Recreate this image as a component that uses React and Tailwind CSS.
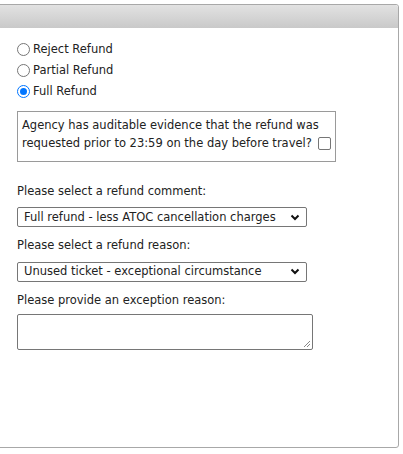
const refundTypes = [
  { value: "reject", label: "Reject Refund" },
  { value: "partial", label: "Partial Refund" },
  { value: "full", label: "Full Refund" },
];

function Radio({ checked, label }) {
  return (
    <label className="flex h-[21px] items-center">
      <span
        className={`mr-[3px] flex h-[13px] w-[13px] items-center justify-center rounded-full border ${
          checked ? "border-[#0075ff]" : "border-[#767676]"
        } bg-white`}
      >
        {checked && <span className="h-[7px] w-[7px] rounded-full bg-[#0075ff]" />}
      </span>
      <span>{label}</span>
    </label>
  );
}

function Select({ value }) {
  return (
    <div className="flex h-[20px] w-[290px] items-center justify-between rounded-[2px] border border-[#767676] bg-white pl-[6px] pr-[6px]">
      <span>{value}</span>
      <svg width="10" height="7" viewBox="0 0 10 7" aria-hidden="true">
        <path d="M1.5 1.5 L5 5 L8.5 1.5" fill="none" stroke="#111" strokeWidth="2" />
      </svg>
    </div>
  );
}

export default function App() {
  return (
    <div className="h-[454px] w-[403px] bg-white pt-[4px] text-[11.5px] text-[#222] [font-family:'DejaVu_Sans',Verdana,sans-serif]">
      <div className="ml-[-4px] flex h-[444px] w-[403px] flex-col rounded-[3px] border border-[#a8a8a8]">
        <div className="h-[23px] rounded-t-[3px] bg-gradient-to-b from-[#e2e2e2] to-[#c9c9c9]" />

        <div className="flex flex-col pl-[20px] pt-[11px]">
          <Radio label={refundTypes[0].label} />
          <Radio label={refundTypes[1].label} />
          <Radio label={refundTypes[2].label} checked />

          <div className="mt-[9px] h-[51px] w-[319px] border border-[#9a9a9a] px-[4px] pt-[4px] leading-[18px]">
            <p>Agency has auditable evidence that the refund was</p>
            <p className="flex items-center">
              requested prior to 23:59 on the day before travel?
              <span className="ml-[6px] inline-block h-[13px] w-[13px] rounded-[2px] border border-[#767676] bg-white" />
            </p>
          </div>

          <p className="mt-[21px]">Please select a refund comment:</p>
          <div className="mt-[7px]">
            <Select value="Full refund - less ATOC cancellation charges" />
          </div>

          <p className="mt-[10px]">Please select a refund reason:</p>
          <div className="mt-[7px]">
            <Select value="Unused ticket - exceptional circumstance" />
          </div>

          <p className="mt-[10px]">Please provide an exception reason:</p>
          <div className="relative mt-[5px] h-[36px] w-[296px] rounded-[2px] border border-[#767676] bg-white">
            <svg className="absolute bottom-[1px] right-[1px]" width="8" height="8" viewBox="0 0 8 8" aria-hidden="true">
              <path d="M7 1 L1 7 M7 4 L4 7" stroke="#888" strokeWidth="1" />
            </svg>
          </div>
        </div>
      </div>
    </div>
  );
}
